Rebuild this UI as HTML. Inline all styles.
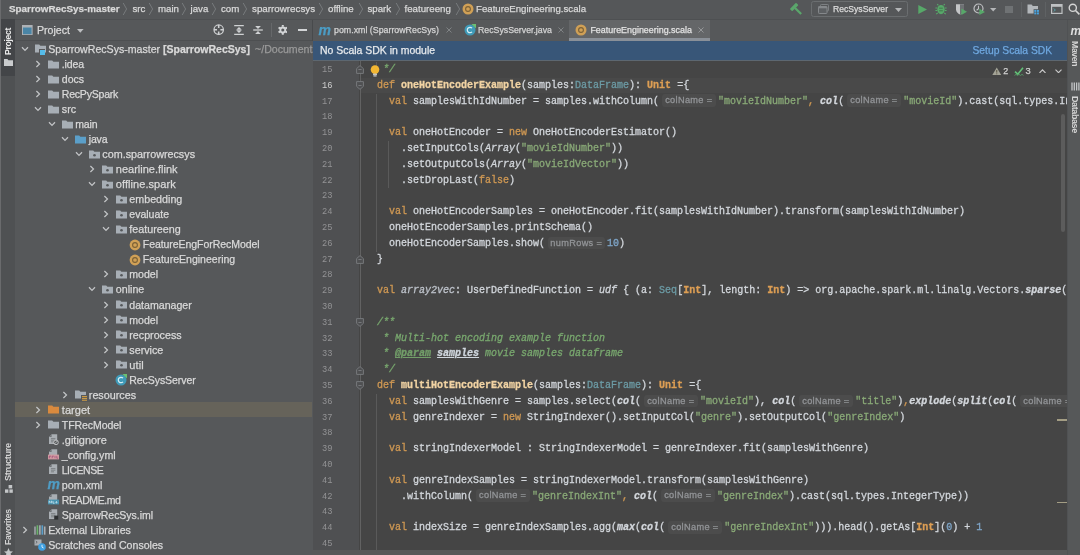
<!DOCTYPE html>
<html lang="en"><head><meta charset="utf-8"><title>SparrowRecSys-master – FeatureEngineering.scala</title>
<style>
*{box-sizing:border-box;margin:0;padding:0}
html,body{width:1080px;height:555px;overflow:hidden;background:#56585a;}
body{position:relative;font-family:"Liberation Sans",sans-serif;font-size:10px;color:#d9d9d9;}
.abs{position:absolute}
.t{position:absolute;white-space:pre;line-height:14px;height:14px;letter-spacing:0;-webkit-text-stroke:0.25px}
.b{font-weight:bold}
.dim{color:#9a9a9a;}
.code{position:absolute;white-space:pre;font-family:"Liberation Mono",monospace;font-size:10px;line-height:16px;height:16px;color:#d2d6db;left:377px;-webkit-text-stroke:0.3px}
.ln{position:absolute;white-space:pre;font-family:"Liberation Mono",monospace;font-size:8.7px;line-height:16px;height:16px;color:#939395;left:322px}
.k{color:#cf9853} .kb{color:#dd9e54;font-weight:bold} .s{color:#89a977} .n{color:#7fa6c9}
.f{font-weight:bold;color:#f1d3a3} .ty{color:#6c9ba5} .i{font-style:italic} .c{color:#78a76e;font-style:italic}
.ct{color:#729e69;font-style:italic;font-weight:bold;text-decoration:underline} .cp{color:#cfd6dd;font-style:italic;font-weight:bold;text-decoration:underline}
.h{display:inline-block;font-family:"Liberation Sans",sans-serif;font-size:9.2px;letter-spacing:0.34px;color:#929497;background:#4c4c4c;border-radius:3px;height:12.6px;line-height:12.4px;vertical-align:middle;position:relative;top:-0.2px;text-align:center;margin:0 2.1px 0 2.5px;font-style:normal;font-weight:normal;overflow:hidden}
.vt{position:absolute;white-space:pre;line-height:14px;height:14px;transform-origin:0 0}
.ln.cur{color:#d0d0d0}
.code .b{font-weight:bold}
#root{position:absolute;left:0;top:0;width:1080px;height:555px;will-change:transform}

</style></head>
<body><div id="root">
<div class="abs" style="left:0px;top:0px;width:1080px;height:20px;background:#555759;"></div>
<div class="abs" style="left:0px;top:19px;width:1080px;height:1px;background:#4e5052;"></div>
<div id="t1" class="t b" style="left:9px;top:2px;font-size:9.85px;">SparrowRecSys-master</div>
<div id="t2" class="t " style="left:132.5px;top:2px;font-size:9.7px;">src</div>
<div id="t3" class="t " style="left:158px;top:2px;font-size:9.7px;">main</div>
<div id="t4" class="t " style="left:190.5px;top:2px;font-size:9.7px;">java</div>
<div id="t5" class="t " style="left:221px;top:2px;font-size:9.7px;">com</div>
<div id="t6" class="t " style="left:252px;top:2px;font-size:9.792px;">sparrowrecsys</div>
<div id="t7" class="t " style="left:328px;top:2px;font-size:9.7px;">offline</div>
<div id="t8" class="t " style="left:367.5px;top:2px;font-size:9.7px;">spark</div>
<div id="t9" class="t " style="left:404.5px;top:2px;font-size:9.7px;">featureeng</div>
<div id="t10" class="t " style="left:476px;top:2px;font-size:9.66px;">FeatureEngineering.scala</div>
<svg class="abs" style="left:122px;top:2px" width="6" height="14" viewBox="0 0 6 14"><path d="M1.2 1 L4.6 7 L1.2 13" fill="none" stroke="#7b7e80" stroke-width="0.9"/></svg>
<svg class="abs" style="left:148px;top:2px" width="6" height="14" viewBox="0 0 6 14"><path d="M1.2 1 L4.6 7 L1.2 13" fill="none" stroke="#7b7e80" stroke-width="0.9"/></svg>
<svg class="abs" style="left:181px;top:2px" width="6" height="14" viewBox="0 0 6 14"><path d="M1.2 1 L4.6 7 L1.2 13" fill="none" stroke="#7b7e80" stroke-width="0.9"/></svg>
<svg class="abs" style="left:211px;top:2px" width="6" height="14" viewBox="0 0 6 14"><path d="M1.2 1 L4.6 7 L1.2 13" fill="none" stroke="#7b7e80" stroke-width="0.9"/></svg>
<svg class="abs" style="left:242px;top:2px" width="6" height="14" viewBox="0 0 6 14"><path d="M1.2 1 L4.6 7 L1.2 13" fill="none" stroke="#7b7e80" stroke-width="0.9"/></svg>
<svg class="abs" style="left:318px;top:2px" width="6" height="14" viewBox="0 0 6 14"><path d="M1.2 1 L4.6 7 L1.2 13" fill="none" stroke="#7b7e80" stroke-width="0.9"/></svg>
<svg class="abs" style="left:357.5px;top:2px" width="6" height="14" viewBox="0 0 6 14"><path d="M1.2 1 L4.6 7 L1.2 13" fill="none" stroke="#7b7e80" stroke-width="0.9"/></svg>
<svg class="abs" style="left:394.5px;top:2px" width="6" height="14" viewBox="0 0 6 14"><path d="M1.2 1 L4.6 7 L1.2 13" fill="none" stroke="#7b7e80" stroke-width="0.9"/></svg>
<svg class="abs" style="left:454.5px;top:2px" width="6" height="14" viewBox="0 0 6 14"><path d="M1.2 1 L4.6 7 L1.2 13" fill="none" stroke="#7b7e80" stroke-width="0.9"/></svg>
<svg class="abs" style="left:461.7px;top:3px" width="12" height="12" viewBox="0 0 12 12"><circle cx="6" cy="6" r="5.5" fill="#d0a056"/><circle cx="6" cy="6" r="2.4" fill="none" stroke="#7a6036" stroke-width="1.1"/></svg>
<svg class="abs" style="left:790px;top:3px" width="12" height="12" viewBox="0 0 12 12"><g transform="rotate(-45 6 6)"><rect x="1.6" y="1.6" width="8.8" height="3.4" rx="0.8" fill="#5aa66b"/><rect x="4.9" y="4.6" width="2.3" height="8.6" fill="#5aa66b"/></g></svg>
<div class="abs" style="left:811px;top:1px;width:97px;height:16px;border:1px solid #6b6e70;border-radius:2.5px"></div>
<svg class="abs" style="left:818px;top:4px" width="11" height="10" viewBox="0 0 11 10"><rect x="2.5" y="0.5" width="8" height="6.5" rx="0.8" fill="none" stroke="#7d8083" stroke-width="1"/><rect x="0.5" y="2.5" width="8.5" height="7" rx="0.8" fill="#5d6063" stroke="#85888b" stroke-width="1"/><rect x="0.5" y="2.5" width="8.5" height="1.8" fill="#85888b"/></svg>
<div id="t11" class="t " style="left:833px;top:2px;font-size:8.618px;color:#dcdcdc;">RecSysServer</div>
<svg class="abs" style="left:894.5px;top:7.5px" width="7" height="4" viewBox="0 0 7 4"><path d="M0 0 H7 L3.5 4 Z" fill="#b4b6b8"/></svg>
<svg class="abs" style="left:918px;top:4.5px" width="9" height="9" viewBox="0 0 9 9"><path d="M0.3 0 L9 4.5 L0.3 9 Z" fill="#57a869"/></svg>
<svg class="abs" style="left:935px;top:3px" width="12" height="12" viewBox="0 0 12 12"><ellipse cx="6" cy="6.6" rx="3.7" ry="4.6" fill="#57a869"/><path d="M3.4 2.4 L2.2 1 M8.6 2.4 L9.8 1 M2.3 5 H0.4 M2.3 7.5 H0.4 M9.7 5 H11.6 M9.7 7.5 H11.6 M2.8 9.8 L1.2 11.2 M9.2 9.8 L10.8 11.2" stroke="#57a869" stroke-width="1.1" fill="none"/><path d="M4.2 5.2 H7.8 M4.2 7.8 H7.8" stroke="#3f6f4a" stroke-width="0.9"/></svg>
<svg class="abs" style="left:955px;top:3px" width="12" height="12" viewBox="0 0 12 12"><path d="M1 1.2 H9 V6.5 C9 9 7 10.6 5 11.4 C3 10.6 1 9 1 6.5 Z" fill="#c3c5c7"/><path d="M5 1.2 H9 V6.5 C9 9 7 10.6 5 11.4 Z" fill="#6e7174"/><path d="M6.4 5.6 L12 8.8 L6.4 12 Z" fill="#57a869"/></svg>
<svg class="abs" style="left:973px;top:3px" width="12" height="12" viewBox="0 0 12 12"><circle cx="5.5" cy="5.5" r="4.5" fill="none" stroke="#bfc1c3" stroke-width="1.2"/><path d="M5.5 2.8 V5.8 L3.6 7.2" stroke="#bfc1c3" stroke-width="1.1" fill="none"/><path d="M6.4 5.8 L12 8.9 L6.4 12 Z" fill="#57a869"/></svg>
<svg class="abs" style="left:990px;top:8px" width="7" height="4" viewBox="0 0 7 4"><path d="M0 0 H6.4 L3.2 3.6 Z" fill="#b4b6b8"/></svg>
<div class="abs" style="left:1005px;top:5.5px;width:7.5px;height:7.5px;background:#6f7274;"></div>
<div class="abs" style="left:1020.5px;top:2px;width:1px;height:15px;background:#5f6264;"></div>
<svg class="abs" style="left:1027px;top:3px" width="13" height="12" viewBox="0 0 13 12"><path d="M0.5 1.5 H4.6 L5.8 3 H11 V10.5 H0.5 Z" fill="#b3b7bb"/><rect x="6.6" y="6.2" width="5.8" height="5.6" fill="#505355"/><rect x="7.3" y="6.9" width="2" height="2" fill="#4aa3df"/><rect x="9.9" y="6.9" width="2" height="2" fill="#4aa3df"/><rect x="7.3" y="9.4" width="2" height="2" fill="#4aa3df"/><rect x="9.9" y="9.4" width="2" height="2" fill="#4aa3df"/></svg>
<div class="abs" style="left:1045px;top:2px;width:1px;height:15px;background:#5f6264;"></div>
<svg class="abs" style="left:1051px;top:4px" width="12" height="10" viewBox="0 0 12 10"><rect x="0.6" y="0.6" width="10.4" height="8.8" fill="none" stroke="#bfc1c3" stroke-width="1.2"/><rect x="0.6" y="0.6" width="10.4" height="2.2" fill="#bfc1c3"/><path d="M2.6 4.6 L4.4 6 L2.6 7.4" stroke="#57a0a8" stroke-width="0.9" fill="none"/></svg>
<svg class="abs" style="left:1068px;top:3px" width="12" height="12" viewBox="0 0 12 12"><circle cx="4.8" cy="4.8" r="3.6" fill="none" stroke="#d5d5d5" stroke-width="1.4"/><path d="M7.5 7.5 L11.4 11.4" stroke="#d5d5d5" stroke-width="1.6"/></svg>
<div class="abs" style="left:0px;top:20px;width:15px;height:535px;background:#4f5153;"></div>
<div class="abs" style="left:0px;top:0px;width:1px;height:555px;background:#6a6b6d;"></div>
<div class="abs" style="left:1.2px;top:19px;width:13.8px;height:56.5px;background:#434548;"></div>
<div id="t12" class="vt" style="left:1px;top:54.5px;transform:rotate(-90deg);font-size:8.689px;letter-spacing:-0.320px;font-weight:bold;color:#ececec;">Project</div>
<svg class="abs" style="left:4px;top:59px" width="9" height="7" viewBox="0 0 9 7"><path d="M0 0 H3.4 L4.4 1.2 H9 V7 H0 Z" fill="#c9cbcd"/></svg>
<div id="t13" class="vt" style="left:1px;top:480.5px;transform:rotate(-90deg);font-size:9.207px;letter-spacing:-0.346px;color:#d4d4d4;font-weight:bold;">Structure</div>
<svg class="abs" style="left:4.5px;top:485px" width="8" height="8" viewBox="0 0 8 8"><rect x="3.6" y="0" width="3.6" height="3.4" fill="#c4c6c8"/><rect x="0" y="4.4" width="3.4" height="3.4" fill="#c4c6c8"/><rect x="4.4" y="4.4" width="3.4" height="3.4" fill="#c4c6c8"/></svg>
<div id="t14" class="vt" style="left:1px;top:545px;transform:rotate(-90deg);font-size:8.717px;letter-spacing:-0.327px;color:#d4d4d4;font-weight:bold;">Favorites</div>
<svg class="abs" style="left:3.5px;top:547.5px" width="9" height="9" viewBox="0 0 9 9"><path d="M4.5 0 L5.9 3.2 L9 3.5 L6.6 5.6 L7.4 9 L4.5 7.2 L1.6 9 L2.4 5.6 L0 3.5 L3.1 3.2 Z" fill="#c4c6c8"/></svg>
<div class="abs" style="left:1067px;top:20px;width:13px;height:535px;background:#565859;"></div>
<div class="abs" style="left:1066.5px;top:20px;width:1px;height:535px;background:#505254;"></div>
<div id="t15" class="t " style="left:1070.5px;top:23.5px;font-style:italic;font-weight:bold;font-size:12px;color:#dedede;-webkit-text-stroke:0;">m</div>
<div id="t16" class="vt" style="left:1082px;top:40.5px;transform:rotate(90deg);font-size:8.771px;letter-spacing:-0.415px;color:#d4d4d4;font-weight:bold;">Maven</div>
<svg class="abs" style="left:1070.5px;top:82px" width="9" height="9" viewBox="0 0 9 9"><path d="M1 0.5 V8.5 M3.3 0.5 V8.5 M5.6 0.5 V8.5 M7.9 0.5 V8.5" stroke="#c4c6c8" stroke-width="1.3"/></svg>
<div id="t17" class="vt" style="left:1082px;top:96px;transform:rotate(90deg);font-size:8.966px;letter-spacing:-0.379px;color:#d4d4d4;font-weight:bold;">Database</div>
<div class="abs" style="left:15px;top:20px;width:297px;height:535px;background:#56585a;"></div>
<svg class="abs" style="left:22.2px;top:25.3px" width="10.6" height="10.2" viewBox="0 0 10.6 10.2"><rect x="0.5" y="0.5" width="9.6" height="9.2" fill="#4a85a6" stroke="#aeb2b6" stroke-width="1"/><rect x="0.5" y="0.5" width="9.6" height="2" fill="#aeb2b6"/></svg>
<div id="t18" class="t " style="left:37px;top:22.8px;font-size:10.61px;color:#dadada;">Project</div>
<svg class="abs" style="left:76.5px;top:29px" width="7" height="4" viewBox="0 0 7 4"><path d="M0 0 H6.6 L3.3 3.8 Z" fill="#bdbfc1"/></svg>
<svg class="abs" style="left:213.3px;top:24px" width="11.4" height="11.4" viewBox="0 0 11.4 11.4"><circle cx="5.7" cy="5.7" r="4.7" fill="none" stroke="#cfd1d3" stroke-width="1.25"/><path d="M5.7 1 V4 M5.7 7.4 V10.4 M1 5.7 H4 M7.4 5.7 H10.4" stroke="#cfd1d3" stroke-width="1.5"/></svg>
<svg class="abs" style="left:233.5px;top:25px" width="10" height="10" viewBox="0 0 10 10"><path d="M0.2 0.7 H9.8 M0.2 9.3 H9.8" stroke="#cfd1d3" stroke-width="1.3"/><path d="M5 2 L7.8 4.7 H2.2 Z M5 8 L7.8 5.3 H2.2 Z" fill="#cfd1d3"/></svg>
<svg class="abs" style="left:253px;top:25px" width="10" height="10" viewBox="0 0 10 10"><path d="M0.2 5 H9.8" stroke="#cfd1d3" stroke-width="1.3"/><path d="M5 3.9 L7.9 0.9 H2.1 Z M5 6.1 L7.9 9.1 H2.1 Z" fill="#cfd1d3"/></svg>
<div class="abs" style="left:270.6px;top:23px;width:1px;height:14px;background:#66686a;"></div>
<svg class="abs" style="left:277.8px;top:25px" width="9.6" height="9.9" viewBox="0 0 9.6 9.9"><g transform="translate(4.8 4.95)"><circle r="2.5" fill="none" stroke="#d3d5d7" stroke-width="1.9"/><g stroke="#d3d5d7" stroke-width="2"><path d="M0 -4.9 V-3.1 M0 3.1 V4.9"/><path d="M0 -4.9 V-3.1 M0 3.1 V4.9" transform="rotate(60)"/><path d="M0 -4.9 V-3.1 M0 3.1 V4.9" transform="rotate(120)"/></g></g></svg>
<div class="abs" style="left:297.6px;top:29.3px;width:9.4px;height:1.4px;background:#d3d5d7;"></div>
<div class="abs" style="left:15px;top:40px;width:297px;height:1px;background:#4d4f51;"></div>
<svg class="abs" style="left:20.499999999999996px;top:46.0px" width="8" height="6" viewBox="0 0 8 6"><path d="M1 1.2 L4 4.4 L7 1.2" fill="none" stroke="#c2c4c6" stroke-width="1.25"/></svg>
<svg class="abs" style="left:34.5px;top:44.0px" width="11" height="9" viewBox="0 0 11 9"><path d="M0 0.4 H4.2 L5.4 1.8 H11 V8.6 H0 Z" fill="#a7aeb5"/></svg>
<div class="abs" style="left:39.3px;top:48.8px;width:6.2px;height:6.2px;background:#56585a;"></div>
<div class="abs" style="left:40.1px;top:49.6px;width:5.4px;height:5.4px;background:#55bbe8;"></div>
<div id="t19" class="t " style="left:48.3px;top:42.0px;font-size:10.6px;">SparrowRecSys-master</div>
<div id="t20" class="t b" style="left:163px;top:42.0px;font-size:10.512px;">[SparrowRecSys]</div>
<div class="abs" style="left:255px;top:42.0px;width:58px;height:14px;overflow:hidden"><div id="tdoc" class="t dim" style="left:0;top:0;font-size:10.6px">~/Documents/GitHub/SparrowRecSys-master</div></div>
<svg class="abs" style="left:35.0px;top:60.03px" width="6" height="8" viewBox="0 0 6 8"><path d="M1.4 1 L4.5 4 L1.4 7" fill="none" stroke="#c2c4c6" stroke-width="1.25"/></svg>
<svg class="abs" style="left:48.0px;top:59.53px" width="11" height="9" viewBox="0 0 11 9"><path d="M0 0.4 H4.2 L5.4 1.8 H11 V8.6 H0 Z" fill="#a7aeb5"/></svg>
<div id="t21" class="t " style="left:61.8px;top:57.03px;letter-spacing:-0.095px;font-size:10.52px;">.idea</div>
<svg class="abs" style="left:35.0px;top:75.06px" width="6" height="8" viewBox="0 0 6 8"><path d="M1.4 1 L4.5 4 L1.4 7" fill="none" stroke="#c2c4c6" stroke-width="1.25"/></svg>
<svg class="abs" style="left:48.0px;top:74.56px" width="11" height="9" viewBox="0 0 11 9"><path d="M0 0.4 H4.2 L5.4 1.8 H11 V8.6 H0 Z" fill="#a7aeb5"/></svg>
<div id="t22" class="t " style="left:61.8px;top:72.06px;font-size:10.566px;">docs</div>
<svg class="abs" style="left:35.0px;top:90.09px" width="6" height="8" viewBox="0 0 6 8"><path d="M1.4 1 L4.5 4 L1.4 7" fill="none" stroke="#c2c4c6" stroke-width="1.25"/></svg>
<svg class="abs" style="left:48.0px;top:89.59px" width="11" height="9" viewBox="0 0 11 9"><path d="M0 0.4 H4.2 L5.4 1.8 H11 V8.6 H0 Z" fill="#a7aeb5"/></svg>
<div id="t23" class="t " style="left:61.8px;top:87.09px;letter-spacing:-0.210px;font-size:10.52px;">RecPySpark</div>
<svg class="abs" style="left:34.0px;top:106.12px" width="8" height="6" viewBox="0 0 8 6"><path d="M1 1.2 L4 4.4 L7 1.2" fill="none" stroke="#c2c4c6" stroke-width="1.25"/></svg>
<svg class="abs" style="left:48.0px;top:104.62px" width="11" height="9" viewBox="0 0 11 9"><path d="M0 0.4 H4.2 L5.4 1.8 H11 V8.6 H0 Z" fill="#a7aeb5"/></svg>
<div id="t24" class="t " style="left:61.8px;top:102.12px;font-size:10.733px;">src</div>
<svg class="abs" style="left:47.5px;top:121.14999999999999px" width="8" height="6" viewBox="0 0 8 6"><path d="M1 1.2 L4 4.4 L7 1.2" fill="none" stroke="#c2c4c6" stroke-width="1.25"/></svg>
<svg class="abs" style="left:61.5px;top:119.64999999999999px" width="11" height="9" viewBox="0 0 11 9"><path d="M0 0.4 H4.2 L5.4 1.8 H11 V8.6 H0 Z" fill="#a7aeb5"/></svg>
<div id="t25" class="t " style="left:75.3px;top:117.14999999999999px;letter-spacing:-0.197px;font-size:10.52px;">main</div>
<svg class="abs" style="left:61.0px;top:136.18px" width="8" height="6" viewBox="0 0 8 6"><path d="M1 1.2 L4 4.4 L7 1.2" fill="none" stroke="#c2c4c6" stroke-width="1.25"/></svg>
<svg class="abs" style="left:75.0px;top:134.68px" width="11" height="9" viewBox="0 0 11 9"><path d="M0 0.4 H4.2 L5.4 1.8 H11 V8.6 H0 Z" fill="#5b9fc9"/></svg>
<div id="t26" class="t " style="left:88.8px;top:132.18px;letter-spacing:-0.198px;font-size:10.52px;">java</div>
<svg class="abs" style="left:74.5px;top:151.20999999999998px" width="8" height="6" viewBox="0 0 8 6"><path d="M1 1.2 L4 4.4 L7 1.2" fill="none" stroke="#c2c4c6" stroke-width="1.25"/></svg>
<svg class="abs" style="left:88.5px;top:149.70999999999998px" width="11" height="9" viewBox="0 0 11 9"><path d="M0 0.4 H4.2 L5.4 1.8 H11 V8.6 H0 Z" fill="#a7aeb5"/><circle cx="5.5" cy="5.3" r="1.3" fill="#55585a"/></svg>
<div id="t27" class="t " style="left:102.3px;top:147.20999999999998px;font-size:10.788px;">com.sparrowrecsys</div>
<svg class="abs" style="left:89.0px;top:165.24px" width="6" height="8" viewBox="0 0 6 8"><path d="M1.4 1 L4.5 4 L1.4 7" fill="none" stroke="#c2c4c6" stroke-width="1.25"/></svg>
<svg class="abs" style="left:102.0px;top:164.74px" width="11" height="9" viewBox="0 0 11 9"><path d="M0 0.4 H4.2 L5.4 1.8 H11 V8.6 H0 Z" fill="#a7aeb5"/><circle cx="5.5" cy="5.3" r="1.3" fill="#55585a"/></svg>
<div id="t28" class="t " style="left:115.8px;top:162.24px;letter-spacing:0.002px;font-size:11.0px;">nearline.flink</div>
<svg class="abs" style="left:88.0px;top:181.26999999999998px" width="8" height="6" viewBox="0 0 8 6"><path d="M1 1.2 L4 4.4 L7 1.2" fill="none" stroke="#c2c4c6" stroke-width="1.25"/></svg>
<svg class="abs" style="left:102.0px;top:179.76999999999998px" width="11" height="9" viewBox="0 0 11 9"><path d="M0 0.4 H4.2 L5.4 1.8 H11 V8.6 H0 Z" fill="#a7aeb5"/><circle cx="5.5" cy="5.3" r="1.3" fill="#55585a"/></svg>
<div id="t29" class="t " style="left:115.8px;top:177.26999999999998px;letter-spacing:0.061px;font-size:11.0px;">offline.spark</div>
<svg class="abs" style="left:102.50000000000001px;top:195.29999999999998px" width="6" height="8" viewBox="0 0 6 8"><path d="M1.4 1 L4.5 4 L1.4 7" fill="none" stroke="#c2c4c6" stroke-width="1.25"/></svg>
<svg class="abs" style="left:115.50000000000001px;top:194.79999999999998px" width="11" height="9" viewBox="0 0 11 9"><path d="M0 0.4 H4.2 L5.4 1.8 H11 V8.6 H0 Z" fill="#a7aeb5"/><circle cx="5.5" cy="5.3" r="1.3" fill="#55585a"/></svg>
<div id="t30" class="t " style="left:129.3px;top:192.29999999999998px;font-size:10.723px;">embedding</div>
<svg class="abs" style="left:102.50000000000001px;top:210.32999999999998px" width="6" height="8" viewBox="0 0 6 8"><path d="M1.4 1 L4.5 4 L1.4 7" fill="none" stroke="#c2c4c6" stroke-width="1.25"/></svg>
<svg class="abs" style="left:115.50000000000001px;top:209.82999999999998px" width="11" height="9" viewBox="0 0 11 9"><path d="M0 0.4 H4.2 L5.4 1.8 H11 V8.6 H0 Z" fill="#a7aeb5"/><circle cx="5.5" cy="5.3" r="1.3" fill="#55585a"/></svg>
<div id="t31" class="t " style="left:129.3px;top:207.32999999999998px;font-size:10.54px;">evaluate</div>
<svg class="abs" style="left:101.50000000000001px;top:226.35999999999999px" width="8" height="6" viewBox="0 0 8 6"><path d="M1 1.2 L4 4.4 L7 1.2" fill="none" stroke="#c2c4c6" stroke-width="1.25"/></svg>
<svg class="abs" style="left:115.50000000000001px;top:224.85999999999999px" width="11" height="9" viewBox="0 0 11 9"><path d="M0 0.4 H4.2 L5.4 1.8 H11 V8.6 H0 Z" fill="#a7aeb5"/><circle cx="5.5" cy="5.3" r="1.3" fill="#55585a"/></svg>
<div id="t32" class="t " style="left:129.3px;top:222.35999999999999px;font-size:10.776px;">featureeng</div>
<svg class="abs" style="left:128.5px;top:238.98999999999998px" width="12" height="12" viewBox="0 0 12 12"><circle cx="6" cy="6" r="5.4" fill="#d0a056"/><circle cx="6" cy="6" r="2.4" fill="none" stroke="#7a6036" stroke-width="1.1"/></svg>
<div id="t33" class="t " style="left:142.8px;top:237.39px;letter-spacing:-0.065px;font-size:10.52px;">FeatureEngForRecModel</div>
<svg class="abs" style="left:128.5px;top:254.01999999999995px" width="12" height="12" viewBox="0 0 12 12"><circle cx="6" cy="6" r="5.4" fill="#d0a056"/><circle cx="6" cy="6" r="2.4" fill="none" stroke="#7a6036" stroke-width="1.1"/></svg>
<div id="t34" class="t " style="left:142.8px;top:252.41999999999996px;font-size:10.528px;">FeatureEngineering</div>
<svg class="abs" style="left:102.50000000000001px;top:270.45px" width="6" height="8" viewBox="0 0 6 8"><path d="M1.4 1 L4.5 4 L1.4 7" fill="none" stroke="#c2c4c6" stroke-width="1.25"/></svg>
<svg class="abs" style="left:115.50000000000001px;top:269.95px" width="11" height="9" viewBox="0 0 11 9"><path d="M0 0.4 H4.2 L5.4 1.8 H11 V8.6 H0 Z" fill="#a7aeb5"/><circle cx="5.5" cy="5.3" r="1.3" fill="#55585a"/></svg>
<div id="t35" class="t " style="left:129.3px;top:267.45px;font-size:10.585px;">model</div>
<svg class="abs" style="left:88.0px;top:286.48px" width="8" height="6" viewBox="0 0 8 6"><path d="M1 1.2 L4 4.4 L7 1.2" fill="none" stroke="#c2c4c6" stroke-width="1.25"/></svg>
<svg class="abs" style="left:102.0px;top:284.98px" width="11" height="9" viewBox="0 0 11 9"><path d="M0 0.4 H4.2 L5.4 1.8 H11 V8.6 H0 Z" fill="#a7aeb5"/><circle cx="5.5" cy="5.3" r="1.3" fill="#55585a"/></svg>
<div id="t36" class="t " style="left:115.8px;top:282.48px;font-size:10.66px;">online</div>
<svg class="abs" style="left:102.50000000000001px;top:300.51px" width="6" height="8" viewBox="0 0 6 8"><path d="M1.4 1 L4.5 4 L1.4 7" fill="none" stroke="#c2c4c6" stroke-width="1.25"/></svg>
<svg class="abs" style="left:115.50000000000001px;top:300.01px" width="11" height="9" viewBox="0 0 11 9"><path d="M0 0.4 H4.2 L5.4 1.8 H11 V8.6 H0 Z" fill="#a7aeb5"/><circle cx="5.5" cy="5.3" r="1.3" fill="#55585a"/></svg>
<div id="t37" class="t " style="left:129.3px;top:297.51px;font-size:10.606px;">datamanager</div>
<svg class="abs" style="left:102.50000000000001px;top:315.53999999999996px" width="6" height="8" viewBox="0 0 6 8"><path d="M1.4 1 L4.5 4 L1.4 7" fill="none" stroke="#c2c4c6" stroke-width="1.25"/></svg>
<svg class="abs" style="left:115.50000000000001px;top:315.03999999999996px" width="11" height="9" viewBox="0 0 11 9"><path d="M0 0.4 H4.2 L5.4 1.8 H11 V8.6 H0 Z" fill="#a7aeb5"/><circle cx="5.5" cy="5.3" r="1.3" fill="#55585a"/></svg>
<div id="t38" class="t " style="left:129.3px;top:312.53999999999996px;font-size:10.585px;">model</div>
<svg class="abs" style="left:102.50000000000001px;top:330.57px" width="6" height="8" viewBox="0 0 6 8"><path d="M1.4 1 L4.5 4 L1.4 7" fill="none" stroke="#c2c4c6" stroke-width="1.25"/></svg>
<svg class="abs" style="left:115.50000000000001px;top:330.07px" width="11" height="9" viewBox="0 0 11 9"><path d="M0 0.4 H4.2 L5.4 1.8 H11 V8.6 H0 Z" fill="#a7aeb5"/><circle cx="5.5" cy="5.3" r="1.3" fill="#55585a"/></svg>
<div id="t39" class="t " style="left:129.3px;top:327.57px;font-size:10.704px;">recprocess</div>
<svg class="abs" style="left:102.50000000000001px;top:345.59999999999997px" width="6" height="8" viewBox="0 0 6 8"><path d="M1.4 1 L4.5 4 L1.4 7" fill="none" stroke="#c2c4c6" stroke-width="1.25"/></svg>
<svg class="abs" style="left:115.50000000000001px;top:345.09999999999997px" width="11" height="9" viewBox="0 0 11 9"><path d="M0 0.4 H4.2 L5.4 1.8 H11 V8.6 H0 Z" fill="#a7aeb5"/><circle cx="5.5" cy="5.3" r="1.3" fill="#55585a"/></svg>
<div id="t40" class="t " style="left:129.3px;top:342.59999999999997px;font-size:10.753px;">service</div>
<svg class="abs" style="left:102.50000000000001px;top:360.63px" width="6" height="8" viewBox="0 0 6 8"><path d="M1.4 1 L4.5 4 L1.4 7" fill="none" stroke="#c2c4c6" stroke-width="1.25"/></svg>
<svg class="abs" style="left:115.50000000000001px;top:360.13px" width="11" height="9" viewBox="0 0 11 9"><path d="M0 0.4 H4.2 L5.4 1.8 H11 V8.6 H0 Z" fill="#a7aeb5"/><circle cx="5.5" cy="5.3" r="1.3" fill="#55585a"/></svg>
<div id="t41" class="t " style="left:129.3px;top:357.63px;letter-spacing:0.084px;font-size:11.0px;">util</div>
<svg class="abs" style="left:115.20000000000002px;top:373.65999999999997px" width="12" height="12" viewBox="0 0 12 12"><circle cx="6" cy="6" r="5.5" fill="#3f9ab8"/><path d="M8 4.2 A2.7 2.7 0 1 0 8 7.8" fill="none" stroke="#d6eef5" stroke-width="1.2"/><path d="M7.4 0 H12 V4.6 Z" fill="#6bbf73"/></svg>
<div id="t42" class="t " style="left:129.3px;top:372.65999999999997px;letter-spacing:-0.076px;font-size:10.52px;">RecSysServer</div>
<svg class="abs" style="left:62.0px;top:390.69px" width="6" height="8" viewBox="0 0 6 8"><path d="M1.4 1 L4.5 4 L1.4 7" fill="none" stroke="#c2c4c6" stroke-width="1.25"/></svg>
<svg class="abs" style="left:75.0px;top:390.19px" width="11" height="9" viewBox="0 0 11 9"><path d="M0 0.4 H4.2 L5.4 1.8 H11 V8.6 H0 Z" fill="#a7aeb5"/></svg>
<div class="abs" style="left:81.0px;top:395.19px;width:5.5px;height:5.5px;background:#56585a;"></div>
<svg class="abs" style="left:81.5px;top:395.69px" width="5" height="5" viewBox="0 0 5 5"><path d="M0 0.6 H5 M0 2.4 H5 M0 4.2 H5" stroke="#d9a343" stroke-width="1"/></svg>
<div id="t43" class="t " style="left:88.8px;top:387.69px;font-size:10.783px;">resources</div>
<div class="abs" style="left:15px;top:402px;width:297px;height:15px;background:#66635a;"></div>
<svg class="abs" style="left:35.0px;top:405.71999999999997px" width="6" height="8" viewBox="0 0 6 8"><path d="M1.4 1 L4.5 4 L1.4 7" fill="none" stroke="#c2c4c6" stroke-width="1.25"/></svg>
<svg class="abs" style="left:48.0px;top:405.21999999999997px" width="11" height="9" viewBox="0 0 11 9"><path d="M0 0.4 H4.2 L5.4 1.8 H11 V8.6 H0 Z" fill="#d98a3e"/></svg>
<div id="t44" class="t " style="left:61.8px;top:402.71999999999997px;letter-spacing:0.043px;font-size:11.0px;">target</div>
<svg class="abs" style="left:35.0px;top:420.75px" width="6" height="8" viewBox="0 0 6 8"><path d="M1.4 1 L4.5 4 L1.4 7" fill="none" stroke="#c2c4c6" stroke-width="1.25"/></svg>
<svg class="abs" style="left:48.0px;top:420.25px" width="11" height="9" viewBox="0 0 11 9"><path d="M0 0.4 H4.2 L5.4 1.8 H11 V8.6 H0 Z" fill="#a7aeb5"/></svg>
<div id="t45" class="t " style="left:61.8px;top:417.75px;letter-spacing:-0.066px;font-size:10.52px;">TFRecModel</div>
<svg class="abs" style="left:48.0px;top:434.28px" width="11" height="11" viewBox="0 0 11 11"><path d="M3.6 0.3 H9.2 V10 H1 V2.9 Z" fill="#a9aeb3"/><path d="M3.6 0.3 V2.9 H1 Z" fill="#6f7376"/><path d="M3 4.6 H7.4 M3 6.2 H7.4 M3 7.8 H6" stroke="#6a6e71" stroke-width="0.7"/><circle cx="8" cy="8.4" r="2.3" fill="#55585a" stroke="#c9cbcd" stroke-width="0.9"/><path d="M6.5 9.9 L9.5 6.9" stroke="#c9cbcd" stroke-width="0.8"/></svg>
<div id="t46" class="t " style="left:61.8px;top:432.78px;font-size:10.942px;">.gitignore</div>
<svg class="abs" style="left:48.0px;top:449.31px" width="11" height="11" viewBox="0 0 11 11"><path d="M3.6 0.3 H9.2 V10 H1 V2.9 Z" fill="#a9aeb3"/><path d="M3.6 0.3 V2.9 H1 Z" fill="#6f7376"/><rect x="0" y="5.6" width="11" height="4.8" fill="#cf9aa0"/><path d="M1.4 7 V9.2 M1.4 7.2 H3 M4.2 7 V9.2 M4.2 7.2 H5.8 M7 7 V9.2 M8.8 7 V9.2 H10" stroke="#a04a78" stroke-width="0.7" fill="none"/></svg>
<div id="t47" class="t " style="left:61.8px;top:447.81px;font-size:10.651px;">_config.yml</div>
<svg class="abs" style="left:48.0px;top:464.34px" width="11" height="11" viewBox="0 0 11 11"><path d="M3.6 0.3 H9.2 V10 H1 V2.9 Z" fill="#a9aeb3"/><path d="M3.6 0.3 V2.9 H1 Z" fill="#6f7376"/><path d="M3 4.6 H7.4 M3 6.2 H7.4 M3 7.8 H6" stroke="#6a6e71" stroke-width="0.7"/></svg>
<div id="t48" class="t " style="left:61.8px;top:462.84px;letter-spacing:-0.525px;font-size:10.52px;">LICENSE</div>
<div id="t49" class="t " style="left:47.5px;top:477.37px;font-style:italic;font-weight:bold;font-size:14px;color:#4f9cc4;letter-spacing:-0.4px;">m</div>
<div id="t50" class="t " style="left:61.8px;top:477.87px;font-size:10.744px;">pom.xml</div>
<svg class="abs" style="left:48.0px;top:494.4px" width="11" height="11" viewBox="0 0 11 11"><path d="M3.6 0.3 H9.2 V10 H1 V2.9 Z" fill="#a9aeb3"/><path d="M3.6 0.3 V2.9 H1 Z" fill="#6f7376"/><rect x="0" y="5.6" width="11" height="4.8" fill="#4a94b0"/><path d="M1.2 9.2 V7 L2.4 8.2 L3.6 7 V9.2 M5 7 V9.2 H6.6 M8.4 7 V9.2 M7.6 8.4 L8.4 9.2 L9.2 8.4" stroke="#d9edf5" stroke-width="0.7" fill="none"/></svg>
<div id="t51" class="t " style="left:61.8px;top:492.9px;letter-spacing:-0.420px;font-size:10.52px;">README.md</div>
<svg class="abs" style="left:48.0px;top:509.43000000000006px" width="11" height="11" viewBox="0 0 11 11"><path d="M3.6 0.3 H9.2 V10 H1 V2.9 Z" fill="#a9aeb3"/><path d="M3.6 0.3 V2.9 H1 Z" fill="#6f7376"/><path d="M3 4.6 H7.4 M3 6.2 H7.4 M3 7.8 H6" stroke="#6a6e71" stroke-width="0.7"/><rect x="6.2" y="6.6" width="4" height="4" fill="#2e3032"/></svg>
<div id="t52" class="t " style="left:61.8px;top:507.93000000000006px;letter-spacing:-0.028px;font-size:10.52px;">SparrowRecSys.iml</div>
<svg class="abs" style="left:21.499999999999996px;top:525.96px" width="6" height="8" viewBox="0 0 6 8"><path d="M1.4 1 L4.5 4 L1.4 7" fill="none" stroke="#c2c4c6" stroke-width="1.25"/></svg>
<svg class="abs" style="left:34.0px;top:524.96px" width="12" height="10" viewBox="0 0 12 10"><rect x="0.3" y="1.5" width="1.4" height="8.2" fill="#a9aeb3"/><rect x="2.6" y="0.3" width="1.6" height="9.4" fill="#6bb36b"/><rect x="5.1" y="0.3" width="1.6" height="9.4" fill="#a9aeb3"/><rect x="7.5" y="0.3" width="1.6" height="9.4" fill="#5b9fc9"/><rect x="9.9" y="1.5" width="1.6" height="8.2" fill="#a9aeb3"/></svg>
<div id="t53" class="t " style="left:48.3px;top:522.96px;font-size:10.616px;">External Libraries</div>
<svg class="abs" style="left:34.0px;top:538.99px" width="12" height="12" viewBox="0 0 12 12"><path d="M0.5 0.5 H7.5 V6.5 H0.5 Z" fill="#a9aeb3"/><path d="M1.8 2 L3.2 3.2 L1.8 4.4" stroke="#55585a" stroke-width="0.8" fill="none"/><circle cx="8" cy="8" r="3.8" fill="#3f9fe0"/><path d="M8 5.8 V8.2 L9.6 9" stroke="#e6f3fb" stroke-width="0.9" fill="none"/></svg>
<div id="t54" class="t " style="left:48.3px;top:537.99px;font-size:10.608px;">Scratches and Consoles</div>
<div class="abs" style="left:311.5px;top:20px;width:755.5px;height:21px;background:#56585a;"></div>
<div class="abs" style="left:311.5px;top:20px;width:1px;height:21px;background:#484a4c;"></div>
<div id="t55" class="t " style="left:318.5px;top:22.5px;font-style:italic;font-weight:bold;font-size:14px;color:#4b9cc4;letter-spacing:0;">m</div>
<div id="t56" class="t " style="left:334px;top:23px;font-size:8.846px;color:#d4d4d4;">pom.xml (SparrowRecSys)</div>
<svg class="abs" style="left:446px;top:27px" width="6" height="6" viewBox="0 0 6 6"><path d="M0.5 0.5 L5.5 5.5 M5.5 0.5 L0.5 5.5" stroke="#85888a" stroke-width="0.9"/></svg>
<svg class="abs" style="left:464px;top:24px" width="12" height="12" viewBox="0 0 12 12"><circle cx="6" cy="6" r="5.5" fill="#3f9ab8"/><path d="M8 4.2 A2.7 2.7 0 1 0 8 7.8" fill="none" stroke="#d6eef5" stroke-width="1.2"/><path d="M7.4 0 H12 V4.6 Z" fill="#6bbf73"/></svg>
<div id="t57" class="t " style="left:478px;top:23px;font-size:8.768px;color:#d4d4d4;">RecSysServer.java</div>
<svg class="abs" style="left:558px;top:27px" width="6" height="6" viewBox="0 0 6 6"><path d="M0.5 0.5 L5.5 5.5 M5.5 0.5 L0.5 5.5" stroke="#85888a" stroke-width="0.9"/></svg>
<div class="abs" style="left:569px;top:20px;width:141px;height:21px;background:#646668;"></div>
<div class="abs" style="left:569px;top:38px;width:141px;height:3px;background:#8a9098;"></div>
<svg class="abs" style="left:575px;top:24px" width="12" height="12" viewBox="0 0 12 12"><circle cx="6" cy="6" r="5.5" fill="#d0a056"/><circle cx="6" cy="6" r="2.4" fill="none" stroke="#7a6036" stroke-width="1.1"/></svg>
<div id="t58" class="t " style="left:590.4px;top:23px;font-size:8.921px;color:#e2e2e2;">FeatureEngineering.scala</div>
<svg class="abs" style="left:698px;top:27px" width="6" height="6" viewBox="0 0 6 6"><path d="M0.5 0.5 L5.5 5.5 M5.5 0.5 L0.5 5.5" stroke="#9a9c9e" stroke-width="0.9"/></svg>
<div class="abs" style="left:312.5px;top:41px;width:754.5px;height:19.5px;background:#385678;"></div>
<div class="abs" style="left:312.5px;top:60px;width:754.5px;height:1px;background:#5d6770;"></div>
<div id="t59" class="t " style="left:320px;top:43.8px;font-size:10.46px;color:#e6e9ec;">No Scala SDK in module</div>
<div id="t60" class="t " style="left:972.5px;top:43.8px;font-size:10.31px;color:#6fa8e0;">Setup Scala SDK</div>
<div class="abs" style="left:312.5px;top:61px;width:754.5px;height:494px;background:#454545;"></div>
<div class="abs" style="left:312.5px;top:61px;width:46px;height:494px;background:#4f5052;"></div>
<div class="abs" style="left:360px;top:77.5px;width:707px;height:15px;background:#494949;"></div>
<div class="abs" style="left:359.5px;top:61px;width:1px;height:494px;background:#626262;"></div>
<div class="abs" style="left:375.5px;top:62px;width:1px;height:9.900000000000006px;background:#5a5a5a;"></div>
<div class="abs" style="left:375.5px;top:93.5px;width:1px;height:158.20000000000002px;background:#5a5a5a;"></div>
<div class="abs" style="left:375.5px;top:393.70000000000005px;width:1px;height:161.29999999999995px;background:#5a5a5a;"></div>
<div class="abs" style="left:387.5px;top:140.9px;width:1px;height:47.599999999999994px;background:#5a5a5a;"></div>
<div class="abs" style="left:312.5px;top:61px;width:754.5px;height:494px;overflow:hidden"><div class="abs" style="left:-312.5px;top:-61px;width:1080px;height:555px">
<div class="ln" style="top:61.90px">15</div>
<div class="code" style="top:61.90px"><span class="c"> */</span></div>
<div class="ln cur" style="top:77.70px">16</div>
<div class="code" style="top:77.70px"><span class="k">def</span> <span class="f">oneHotEncoderExample</span>(samples:<span class="ty">DataFrame</span>): <span class="kb">Unit</span> ={</div>
<div class="ln" style="top:93.50px">17</div>
<div class="code" style="top:93.50px">  <span class="k">val</span> samplesWithIdNumber = samples.withColumn(<span class="h" style="width:54.4px">colName =</span><span class="s">"movieIdNumber"</span><span class="k">,</span> <span class="i b">col</span>(<span class="h" style="width:54.4px">colName =</span><span class="s">"movieId"</span>).cast(sql.types.IntegerType))</div>
<div class="ln" style="top:109.30px">18</div>
<div class="ln" style="top:125.10px">19</div>
<div class="code" style="top:125.10px">  <span class="k">val</span> oneHotEncoder = <span class="k">new</span> OneHotEncoderEstimator()</div>
<div class="ln" style="top:140.90px">20</div>
<div class="code" style="top:140.90px">    .setInputCols(<span class="i">Array</span>(<span class="s">"movieIdNumber"</span>))</div>
<div class="ln" style="top:156.70px">21</div>
<div class="code" style="top:156.70px">    .setOutputCols(<span class="i">Array</span>(<span class="s">"movieIdVector"</span>))</div>
<div class="ln" style="top:172.50px">22</div>
<div class="code" style="top:172.50px">    .setDropLast(<span class="k">false</span>)</div>
<div class="ln" style="top:188.30px">23</div>
<div class="ln" style="top:204.10px">24</div>
<div class="code" style="top:204.10px">  <span class="k">val</span> oneHotEncoderSamples = oneHotEncoder.fit(samplesWithIdNumber).transform(samplesWithIdNumber)</div>
<div class="ln" style="top:219.90px">25</div>
<div class="code" style="top:219.90px">  oneHotEncoderSamples.printSchema()</div>
<div class="ln" style="top:235.70px">26</div>
<div class="code" style="top:235.70px">  oneHotEncoderSamples.show(<span class="h" style="width:57.4px">numRows =</span><span class="n">10</span>)</div>
<div class="ln" style="top:251.50px">27</div>
<div class="code" style="top:251.50px">}</div>
<div class="ln" style="top:267.30px">28</div>
<div class="ln" style="top:283.10px">29</div>
<div class="code" style="top:283.10px"><span class="k">val</span> <span class="i" style="color:#bcc1c9">array2vec</span>: UserDefinedFunction = <span class="i">udf</span> { (a: <span class="ty">Seq</span>[<span class="kb">Int</span>], length: <span class="kb">Int</span>) =&gt; org.apache.spark.ml.linalg.Vectors.<span class="i b">sparse</span>(length, a.sortWith(_ &lt; _)</div>
<div class="ln" style="top:298.90px">30</div>
<div class="ln" style="top:314.70px">31</div>
<div class="code" style="top:314.70px"><span class="c">/**</span></div>
<div class="ln" style="top:330.50px">32</div>
<div class="code" style="top:330.50px"><span class="c"> * Multi-hot encoding example function</span></div>
<div class="ln" style="top:346.30px">33</div>
<div class="code" style="top:346.30px"><span class="c"> * </span><span class="ct">@param</span><span class="c"> </span><span class="cp">samples</span><span class="c"> movie samples dataframe</span></div>
<div class="ln" style="top:362.10px">34</div>
<div class="code" style="top:362.10px"><span class="c"> */</span></div>
<div class="ln" style="top:377.90px">35</div>
<div class="code" style="top:377.90px"><span class="k">def</span> <span class="f">multiHotEncoderExample</span>(samples:<span class="ty">DataFrame</span>): <span class="kb">Unit</span> ={</div>
<div class="ln" style="top:393.70px">36</div>
<div class="code" style="top:393.70px">  <span class="k">val</span> samplesWithGenre = samples.select(<span class="i b">col</span>(<span class="h" style="width:54.4px">colName =</span><span class="s">"movieId"</span>), <span class="i b">col</span>(<span class="h" style="width:54.4px">colName =</span><span class="s">"title"</span>)<span class="k">,</span><span class="i b">explode</span>(<span class="i b">split</span>(<span class="i b">col</span>(<span class="h" style="width:54.4px">colName =</span><span class="s">"genres"</span>), "\\|"))</div>
<div class="ln" style="top:409.50px">37</div>
<div class="code" style="top:409.50px">  <span class="k">val</span> genreIndexer = <span class="k">new</span> StringIndexer().setInputCol(<span class="s">"genre"</span>).setOutputCol(<span class="s">"genreIndex"</span>)</div>
<div class="ln" style="top:425.30px">38</div>
<div class="ln" style="top:441.10px">39</div>
<div class="code" style="top:441.10px">  <span class="k">val</span> stringIndexerModel : StringIndexerModel = genreIndexer.fit(samplesWithGenre)</div>
<div class="ln" style="top:456.90px">40</div>
<div class="ln" style="top:472.70px">41</div>
<div class="code" style="top:472.70px">  <span class="k">val</span> genreIndexSamples = stringIndexerModel.transform(samplesWithGenre)</div>
<div class="ln" style="top:488.50px">42</div>
<div class="code" style="top:488.50px">    .withColumn(<span class="h" style="width:54.4px">colName =</span><span class="s">"genreIndexInt"</span><span class="k">,</span> <span class="i b">col</span>(<span class="h" style="width:54.4px">colName =</span><span class="s">"genreIndex"</span>).cast(sql.types.IntegerType))</div>
<div class="ln" style="top:504.30px">43</div>
<div class="ln" style="top:520.10px">44</div>
<div class="code" style="top:520.10px">  <span class="k">val</span> indexSize = genreIndexSamples.agg(<span class="i b">max</span>(<span class="i b">col</span>(<span class="h" style="width:54.4px">colName =</span><span class="s">"genreIndexInt"</span>))).head().getAs[<span class="kb">Int</span>](<span class="n">0</span>) + <span class="n">1</span></div>
<div class="ln" style="top:535.90px">45</div>
</div></div>
<div class="abs" style="left:311.5px;top:550px;width:755.5px;height:5px;background:#575859;"></div>
<svg class="abs" style="left:356px;top:65.4px" width="8" height="9" viewBox="0 0 8 9"><path d="M0.6 8.4 V3.6 L4 0.6 L7.4 3.6 V8.4 Z" fill="#4f5052" stroke="#7a7d80" stroke-width="0.9"/><path d="M2.4 4.5 H5.6" stroke="#7a7d80" stroke-width="0.9"/></svg>
<svg class="abs" style="left:356px;top:81.2px" width="8" height="9" viewBox="0 0 8 9"><path d="M0.6 0.6 H7.4 V5.4 L4 8.4 L0.6 5.4 Z" fill="#4f5052" stroke="#7a7d80" stroke-width="0.9"/><path d="M2.4 4.5 H5.6" stroke="#7a7d80" stroke-width="0.9"/></svg>
<svg class="abs" style="left:356px;top:255.0px" width="8" height="9" viewBox="0 0 8 9"><path d="M0.6 8.4 V3.6 L4 0.6 L7.4 3.6 V8.4 Z" fill="#4f5052" stroke="#7a7d80" stroke-width="0.9"/><path d="M2.4 4.5 H5.6" stroke="#7a7d80" stroke-width="0.9"/></svg>
<svg class="abs" style="left:356px;top:318.20000000000005px" width="8" height="9" viewBox="0 0 8 9"><path d="M0.6 0.6 H7.4 V5.4 L4 8.4 L0.6 5.4 Z" fill="#4f5052" stroke="#7a7d80" stroke-width="0.9"/><path d="M2.4 4.5 H5.6" stroke="#7a7d80" stroke-width="0.9"/></svg>
<svg class="abs" style="left:356px;top:365.6px" width="8" height="9" viewBox="0 0 8 9"><path d="M0.6 8.4 V3.6 L4 0.6 L7.4 3.6 V8.4 Z" fill="#4f5052" stroke="#7a7d80" stroke-width="0.9"/><path d="M2.4 4.5 H5.6" stroke="#7a7d80" stroke-width="0.9"/></svg>
<svg class="abs" style="left:356px;top:381.4px" width="8" height="9" viewBox="0 0 8 9"><path d="M0.6 0.6 H7.4 V5.4 L4 8.4 L0.6 5.4 Z" fill="#4f5052" stroke="#7a7d80" stroke-width="0.9"/><path d="M2.4 4.5 H5.6" stroke="#7a7d80" stroke-width="0.9"/></svg>
<svg class="abs" style="left:370px;top:65px" width="10" height="12" viewBox="0 0 10 12"><circle cx="5" cy="4.6" r="4.3" fill="#f2b632"/><rect x="3" y="8.6" width="4" height="1.3" fill="#cfd1d3"/><rect x="3.4" y="10.3" width="3.2" height="1.2" fill="#cfd1d3"/></svg>
<svg class="abs" style="left:992px;top:67px" width="9.5" height="8.5" viewBox="0 0 9.5 8.5"><path d="M4.75 0.4 L9.2 8 H0.3 Z" fill="#a3a396"/><path d="M4.75 3 V5.6 M4.75 6.4 V7.3" stroke="#5a5342" stroke-width="1"/></svg>
<div id="t61" class="t " style="left:1003.3px;top:64px;font-size:8.996px;color:#d0d0d0;">2</div>
<svg class="abs" style="left:1013.5px;top:66.5px" width="10" height="9.5" viewBox="0 0 10 9.5"><path d="M1 4.6 L3.8 7.2 L9 0.8" fill="none" stroke="#62c177" stroke-width="1.6"/><path d="M0.5 8.4 L2 7.4 L3.5 8.4 L5 7.4 L6.5 8.4 L8 7.4 L9.5 8.4" fill="none" stroke="#5aa36a" stroke-width="0.8"/></svg>
<div id="t62" class="t " style="left:1025.6px;top:64px;font-size:9.348px;color:#d0d0d0;">3</div>
<svg class="abs" style="left:1039px;top:68.5px" width="7" height="4.5" viewBox="0 0 7 4.5"><path d="M0.5 4 L3.5 0.9 L6.5 4" fill="none" stroke="#c9c9c9" stroke-width="1.1"/></svg>
<svg class="abs" style="left:1055px;top:68.8px" width="7" height="4.5" viewBox="0 0 7 4.5"><path d="M0.5 0.6 L3.5 3.7 L6.5 0.6" fill="none" stroke="#c9c9c9" stroke-width="1.1"/></svg>
<div class="abs" style="left:1060.5px;top:114px;width:4.5px;height:118px;background:#5c5c5c;border-radius:2.5px"></div>
<div class="abs" style="left:1057px;top:419.3px;width:10px;height:1.5px;background:#a39d84;"></div>
<div class="abs" style="left:1057px;top:501.7px;width:10px;height:1.5px;background:#a39d84;"></div>
</div></body></html>
